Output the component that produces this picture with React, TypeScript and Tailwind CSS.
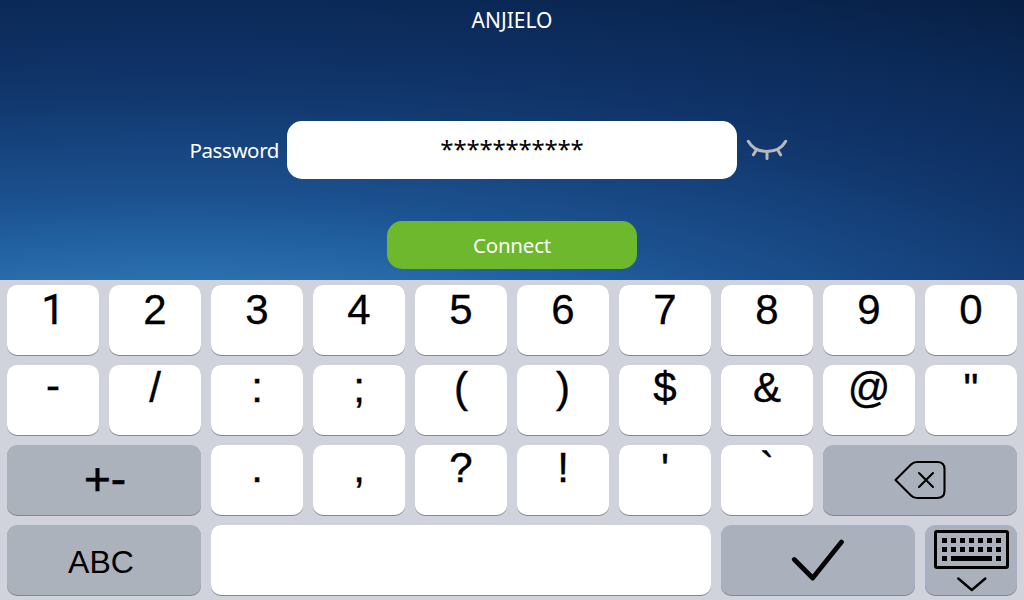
import React, { useState } from 'react';
import clsx from 'clsx';

const digits = ['1', '2', '3', '4', '5', '6', '7', '8', '9', '0'];
const symbols = ['-', '/', ':', ';', '(', ')', '$', '&', '@', '"'];
const punctuation = ['.', ',', '?', '!', "'", '`'];

const offsets: Record<string, string> = {
  '-': '-mt-[3px]',
  '"': 'mt-0',
  "'": 'mt-0',
  '`': '-mt-px',
};

type KeyProps = {
  children?: React.ReactNode;
  className?: string;
  label?: string;
  onClick?: () => void;
};

const Key = ({ children, className, label, onClick }: KeyProps) => (
  <button
    type="button"
    aria-label={label}
    onClick={onClick}
    className={clsx('flex h-[70px] justify-center rounded-[10px] text-black shadow-[0_1px_0_#85878f]', className)}
  >
    {children}
  </button>
);

const ClosedEyeIcon = () => (
  <svg width="42" height="22" viewBox="0 0 42 22" fill="none" stroke="#b9b9b9" strokeWidth="3" strokeLinecap="round">
    <path d="M2.3 2.3C6 9 12.5 12.5 21 12.5S36 9 39.7 2.3" />
    <path d="M10 11.5L7.4 15.8M21 13V19.4M32 11.5L34.6 15.8" />
  </svg>
);

const BackspaceIcon = () => (
  <svg width="52" height="40" viewBox="0 0 52 40" fill="none" stroke="#000" strokeWidth="2.1" strokeLinecap="round" strokeLinejoin="round">
    <path d="M1.5 20L17 4.5Q19.5 2 23 2H43Q50.5 2 50.5 9V31Q50.5 38 43 38H23Q19.5 38 17 35.5Z" />
    <path d="M25 13L39 27M39 13L25 27" />
  </svg>
);

const CheckIcon = () => (
  <svg width="54" height="44" viewBox="0 0 54 44" fill="none" stroke="#060606" strokeWidth="4.8" strokeLinecap="round" strokeLinejoin="round">
    <path d="M3.3 22.5L21.7 41L50.5 5" />
  </svg>
);

const HideKeyboardIcon = () => (
  <svg width="76" height="62" viewBox="0 0 76 62" fill="none" stroke="#000">
    <rect x="1.5" y="1.5" width="72" height="36" rx="1.5" strokeWidth="3" />
    {[8, 17].map((y) =>
      [8, 17, 26, 35, 44, 53, 62].map((x) => <rect key={`${x}-${y}`} x={x} y={y} width="5" height="5" fill="#000" stroke="none" />)
    )}
    <path d="M8 26H13V31H8ZM17 26H58V31H17ZM62 26H67V31H62Z" fill="#000" stroke="none" />
    <path d="M24.3 48.5L37.8 60L51.3 48.5" strokeWidth="2.4" strokeLinecap="round" strokeLinejoin="round" />
  </svg>
);

const App = () => {
  const [password, setPassword] = useState('12345678901');
  const [visible, setVisible] = useState(false);

  const type = (char: string) => setPassword((current) => current + char);

  return (
    <div className="flex h-[600px] w-[1024px] flex-col overflow-hidden bg-[#d0d3dc] font-['Liberation_Sans',sans-serif]">
      {/* Network name and password form */}
      <section className="flex h-[280px] flex-col items-center bg-[radial-gradient(1400px_410px_at_180px_400px,#2d75b3_26%,#2769a8_34%,#2160a0_40%,#1c5290_49%,#16437e_63%,#123a71_72%,#0f3267_81%,#0b2957_98%,#071f44_114%)] font-['Noto_Sans',sans-serif] text-white">
        <h1 className="mt-[5px] h-[30px] text-[21px] leading-[30px]">ANJIELO</h1>

        <div className="mt-[86px] grid w-full grid-cols-[287px_450px_1fr] items-center">
          <label className="pr-[8px] text-right text-[20.5px] leading-[30px] tracking-[-0.4px]">Password</label>
          <div className="flex h-[58px] justify-center rounded-[15px] bg-white pt-[6px] text-[24px] leading-[44px] tracking-[-0.2px] text-black">
            {visible ? password : '*'.repeat(password.length)}
          </div>
          <button type="button" aria-label="Show password" className="ml-[9px] w-[42px]" onClick={() => setVisible(!visible)}>
            <ClosedEyeIcon />
          </button>
        </div>

        <button type="button" className="mt-[42px] h-[48px] w-[250px] rounded-[15px] bg-[#6eb82d] text-[20.5px] leading-[48px] tracking-[-0.2px]">
          Connect
        </button>
      </section>

      {/* On-screen keyboard */}
      <section className="grid grid-cols-10 gap-[10px] px-[7px] pt-[5px] text-[42px] leading-[48px]">
        {digits.map((char) => (
          <Key
            key={char}
            className={clsx('bg-white pt-px [-webkit-text-stroke:0.3px_#000]', char === '1' && "font-['Roboto',sans-serif]")}
            onClick={() => type(char)}
          >
            {char}
          </Key>
        ))}

        {symbols.map((char) => (
          <Key key={char} className="bg-white [-webkit-text-stroke:0.4px_#000]" onClick={() => type(char)}>
            <span className={offsets[char] ?? '-mt-px'}>{char}</span>
          </Key>
        ))}

        <Key className="col-span-2 bg-[#abb2bc] pt-[10px] pl-[2px] text-[46px] [-webkit-text-stroke:0.6px_#000]">+-</Key>
        {punctuation.map((char) => (
          <Key key={char} className="bg-white [-webkit-text-stroke:0.4px_#000]" onClick={() => type(char)}>
            <span className={offsets[char] ?? '-mt-px'}>{char}</span>
          </Key>
        ))}
        <Key label="Backspace" className="col-span-2 items-center bg-[#abb1bc] pr-px" onClick={() => setPassword(password.slice(0, -1))}>
          <BackspaceIcon />
        </Key>

        <Key className="col-span-2 bg-[#abb2bc] pt-[13px] pr-[6px] text-[32px]">ABC</Key>
        <Key label="Space" className="col-span-5 bg-white" onClick={() => type(' ')} />
        <Key label="Enter" className="col-span-2 items-center bg-[#abb1bc] pb-[2px]">
          <CheckIcon />
        </Key>
        <Key label="Hide keyboard" className="bg-[#abb1bc] pt-[5px] pl-[2px]">
          <HideKeyboardIcon />
        </Key>
      </section>
    </div>
  );
};

export default App;
